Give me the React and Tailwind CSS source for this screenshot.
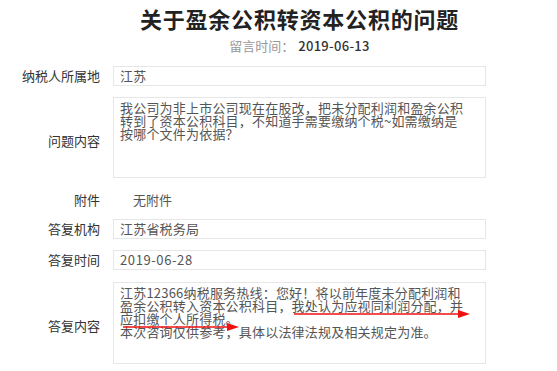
import React from 'react';

const font = { fontFamily: '"Noto Sans CJK SC", "Noto Sans", sans-serif' };

function Row({ label, children, tall, className = '' }) {
  return (
    <div className={`flex items-center ${className}`}>
      <div className={`w-[100px] shrink-0 text-right text-[13px] leading-[16px] text-[#333] ${tall ? 'pt-[6px]' : ''}`}>{label}</div>
      <div className="ml-[13px] w-[373px]">{children}</div>
    </div>
  );
}

function Box({ children, h = 'h-[20px]', className = '' }) {
  return (
    <div className={`relative border border-[#e6e6e6] bg-white px-[6px] text-[13px] tracking-[0.2px] text-[#555] ${h} ${className}`}>
      {children}
    </div>
  );
}

function Arrow({ x1, x2, y }) {
  return (
    <g>
      <line x1={x1} y1={y} x2={x2 - 10} y2={y} stroke="#ee1111" strokeWidth="1.5" />
      <polygon points={`${x2 - 12},${y - 4} ${x2},${y} ${x2 - 12},${y + 4}`} fill="#ee1111" />
    </g>
  );
}

export default function App() {
  return (
    <div className="w-[557px] h-[371px] bg-white overflow-hidden" style={font}>
      <div className="flex">
        <div className="w-[113px] shrink-0" />
        <div className="w-[373px]">
          <h1 className="pt-[4px] h-[32px] text-center text-[22px] leading-[28px] font-bold tracking-[0.8px] text-[#222]">
            关于盈余公积转资本公积的问题
          </h1>
          <div className="mt-[6px] h-[16px] text-center text-[13px] leading-[16px]">
            <span className="text-[#999]">留言时间：</span>
            <span className="ml-[4px] font-medium tracking-[0.3px] text-[#333]">2019-06-13</span>
          </div>
        </div>
      </div>

      <Row label="纳税人所属地" className="mt-[12px]">
        <Box className="leading-[18px]">江苏</Box>
      </Row>

      <Row label="问题内容" tall className="mt-[11px]">
        <Box h="h-[81px]" className="pt-[3px] leading-[13px]">
          我公司为非上市公司现在在股改，把未分配利润和盈余公积
          <br />
          转到了资本公积科目，不知道手需要缴纳个税~如需缴纳是
          <br />
          按哪个文件为依据？
        </Box>
      </Row>

      <div className="mt-[14px] flex h-[16px] items-center">
        <div className="w-[100px] text-right text-[13px] text-[#333]">附件</div>
        <div className="ml-[33px] text-[13px] text-[#555]">无附件</div>
      </div>

      <Row label="答复机构" className="mt-[11px]">
        <Box className="leading-[18px]">江苏省税务局</Box>
      </Row>

      <Row label="答复时间" className="mt-[11px]">
        <Box className="leading-[18px] tracking-[0.6px]">2019-06-28</Box>
      </Row>

      <Row label="答复内容" tall className="mt-[12px]">
        <Box h="h-[82px]" className="pt-[3px] leading-[13px]">
          江苏12366纳税服务热线：您好！将以前年度未分配利润和
          <br />
          盈余公积转入资本公积科目，我处认为应视同利润分配，并
          <br />
          应扣缴个人所得税。
          <br />
          本次咨询仅供参考，具体以法律法规及相关规定为准。
          <svg className="absolute left-0 top-0" width="373" height="82" viewBox="0 0 373 82">
            <Arrow x1={180} x2={356} y={31} />
            <Arrow x1={9} x2={125} y={44} />
          </svg>
        </Box>
      </Row>
    </div>
  );
}
